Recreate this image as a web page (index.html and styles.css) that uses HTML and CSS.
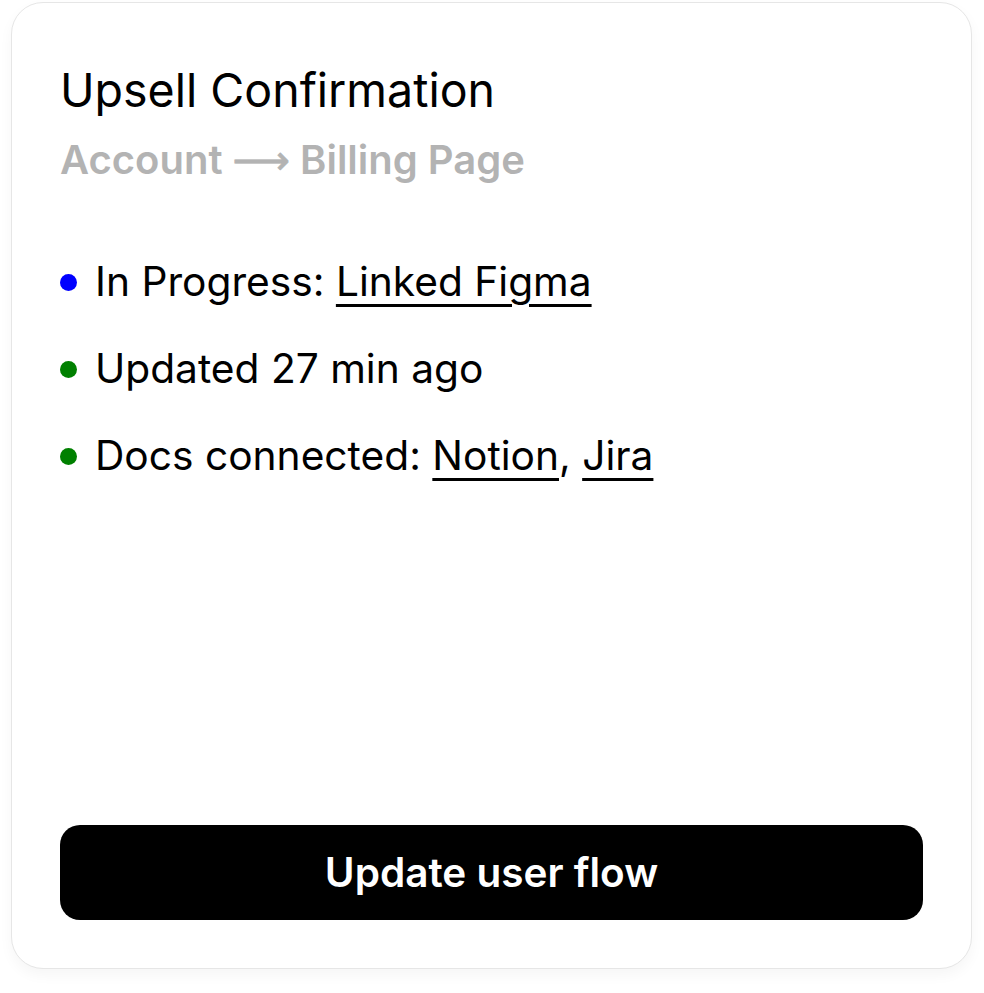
FILE: index.html
```html
<!DOCTYPE html>
<html lang="en">
<head>
<meta charset="utf-8">
<title>Upsell Confirmation</title>
<link rel="stylesheet" href="styles.css">
</head>
<body>
<div class="page">
  <div class="card">
    <header class="card-head">
      <h1 class="title">Upsell Confirmation</h1>
      <p class="path">Account <span class="arrow">⟶</span> Billing Page</p>
    </header>
    <ul class="status-list">
      <li class="status"><span class="dot dot-blue"></span><span>In Progress: <a class="link" href="#">Linked Figma</a></span></li>
      <li class="status"><span class="dot dot-green"></span><span>Updated 27 min ago</span></li>
      <li class="status"><span class="dot dot-green"></span><span>Docs connected: <a class="link" href="#">Notion</a>, <a class="link" href="#">Jira</a></span></li>
    </ul>
    <button class="action" type="button">Update user flow</button>
  </div>
</div>
</body>
</html>
```

FILE: styles.css
```css
* { box-sizing: border-box; }
html, body { margin: 0; padding: 0; background: #ffffff; }
body { font-family: Inter, "Noto Sans", "Liberation Sans", sans-serif; color: #000; }
.page { padding: 2px 12px 24px 11px; }
.card {
  height: 967px;
  border: 1px solid #e6e6e6;
  border-radius: 32px;
  background: #fff;
  box-shadow: 0 6px 14px rgba(0,0,0,0.04);
  padding: 48px;
  display: flex;
  flex-direction: column;
}
.card-head { padding-top: 11px; }
.title { margin: 0; font-size: 46.5px; font-weight: 400; line-height: 56px; }
.path { margin: 18px 0 0; font-size: 40px; font-weight: 600; color: #b3b3b3; line-height: 48px; }
.arrow { font-family: "DejaVu Sans", sans-serif; font-weight: 400; -webkit-text-stroke: 0.8px #b3b3b3; }
.status-list { list-style: none; margin: 73px 0 0; padding: 0; display: flex; flex-direction: column; gap: 37px; }
.status { display: flex; align-items: center; gap: 18px; font-size: 40.7px; line-height: 50px; }
.dot { width: 17px; height: 17px; border-radius: 50%; flex: none; }
.dot-blue { background: #0000ff; }
.dot-green { background: #008000; }
.link { color: #000; text-decoration: underline; text-decoration-thickness: 3px; text-underline-offset: 8px; }
.action {
  margin-top: auto;
  height: 95px;
  border: 0;
  border-radius: 20px;
  background: #000;
  color: #fff;
  font-family: inherit;
  font-size: 40.5px;
  font-weight: 600;
}
```
